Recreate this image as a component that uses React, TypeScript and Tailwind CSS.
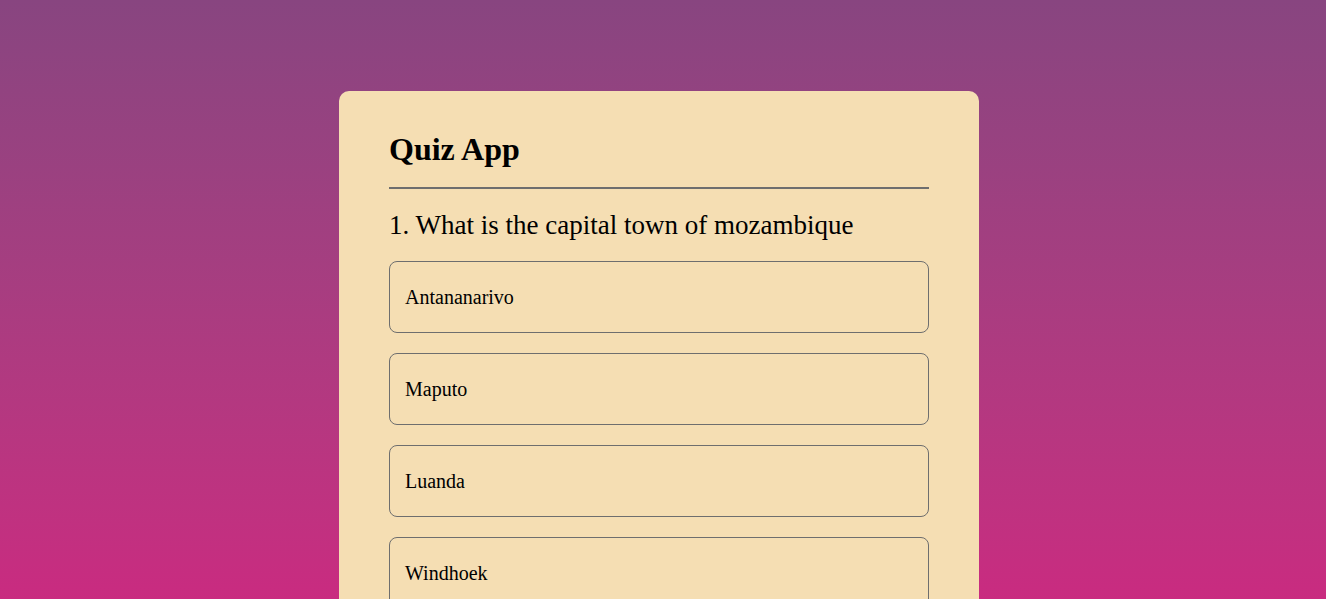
const options = ["Antananarivo", "Maputo", "Luanda", "Windhoek"]

export default function App() {
  return (
    <div className="h-[599px] overflow-hidden bg-gradient-to-b from-[#884580] to-[#c92b80] pt-[91px] font-['Liberation_Serif',serif] text-black">
      <div className="ml-[339px] w-[640px] rounded-[10px] bg-[#f5deb3] px-[50px] pt-[40px] pb-[40px]">
        <h2 className="text-[32px] font-bold leading-[37px]">Quiz App</h2>
        <hr className="mt-[19px] border-t-2 border-[#6e6e6e]" />
        <h3 className="mt-[21px] text-[27px] leading-[31px]">1. What is the capital town of mozambique</h3>
        <ul className="mt-[20px] flex flex-col gap-[20px]">
          {options.map((o) => (
            <li
              key={o}
              className="flex h-[72px] items-center rounded-[8px] border border-[#6e6e6e] px-[15px] text-[20px]"
            >
              {o}
            </li>
          ))}
        </ul>
      </div>
    </div>
  )
}
